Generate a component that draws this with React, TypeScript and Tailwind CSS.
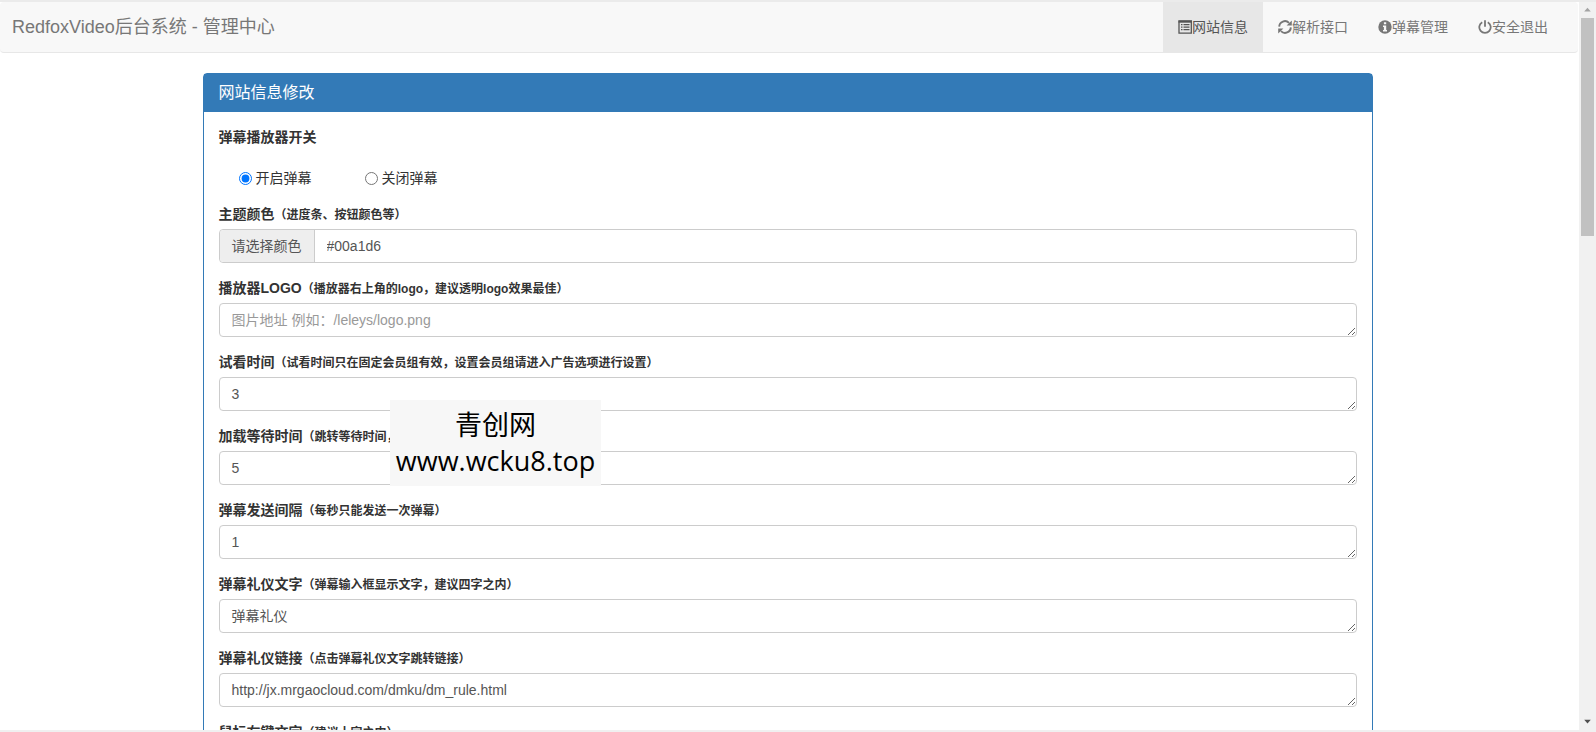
import { useState } from "react"

interface Field {
  id: string
  label: string
  hint: string
  value: string
  placeholder?: string
}

const navItems = [
  { label: '网站信息', icon: ListIcon, active: true },
  { label: '解析接口', icon: RefreshIcon, active: false },
  { label: '弹幕管理', icon: InfoIcon, active: false },
  { label: '安全退出', icon: PowerIcon, active: false },
]

const fields: Field[] = [
  { id: 'logo', label: '播放器LOGO', hint: '（播放器右上角的logo，建议透明logo效果最佳）', value: '', placeholder: '图片地址 例如：/leleys/logo.png' },
  { id: 'trytime', label: '试看时间', hint: '（试看时间只在固定会员组有效，设置会员组请进入广告选项进行设置）', value: '3' },
  { id: 'waittime', label: '加载等待时间', hint: '（跳转等待时间，', value: '5' },
  { id: 'sendtime', label: '弹幕发送间隔', hint: '（每秒只能发送一次弹幕）', value: '1' },
  { id: 'dmrule', label: '弹幕礼仪文字', hint: '（弹幕输入框显示文字，建议四字之内）', value: '弹幕礼仪' },
  { id: 'dmlink', label: '弹幕礼仪链接', hint: '（点击弹幕礼仪文字跳转链接）', value: 'http://jx.mrgaocloud.com/dmku/dm_rule.html' },
  { id: 'rightmenu', label: '鼠标右键文字', hint: '（建议十字之内）', value: '' },
]

function ListIcon() {
  return (
    <svg viewBox="0 0 14 14" className="h-3.5 w-3.5" fill="none" stroke="currentColor" aria-hidden="true">
      <path d="M1 1h12.3v12.2H1z" strokeWidth="1.3" />
      <path d="M.5 1.7h13.3" strokeWidth="2" />
      <path d="M3 4.7h1.5M3 7.2h1.5M3 9.7h1.5M5.5 4.7h6M5.5 7.2h6M5.5 9.7h6" strokeWidth="1.3" />
    </svg>
  )
}

function RefreshIcon() {
  return (
    <svg viewBox="0 0 14 14" className="h-3.5 w-3.5" fill="none" stroke="currentColor" aria-hidden="true">
      <path d="M1.2 6.6A5.7 5.7 0 0 1 11 2.9M12.8 7.4A5.7 5.7 0 0 1 3 11.1" strokeWidth="1.9" />
      <path d="M13.8.4v5.2H8.6zM.2 13.6V8.4h5.2z" fill="currentColor" stroke="none" />
    </svg>
  )
}

function InfoIcon() {
  return (
    <svg viewBox="0 0 14 14" className="h-3.5 w-3.5" aria-hidden="true">
      <circle cx="7" cy="7" r="6.7" fill="currentColor" />
      <path d="M5.9 2.2h2.3v2H5.9zM5 5.4h3.2v4.5H9v1.5H5V9.9h.9V6.9H5z" fill="#f8f8f8" />
    </svg>
  )
}

function PowerIcon() {
  return (
    <svg viewBox="0 0 14 14" className="h-3.5 w-3.5" fill="none" stroke="currentColor" strokeWidth="1.8" aria-hidden="true">
      <path d="M4.2 2.2a5.7 5.7 0 1 0 5.6 0M7 .2v6.6" />
    </svg>
  )
}

function Navbar() {
  return (
    <nav className="mr-px flex h-[51px] justify-between rounded border-b border-[#e7e7e7] bg-[#f8f8f8] pr-[15px]">
      <a href="#" className="px-3 py-[15px] text-lg leading-5 text-[#777]">
        RedfoxVideo后台系统 - 管理中心
      </a>
      <div className="flex">
        {navItems.map(({ label, icon: Icon, active }) => (
          <a
            key={label}
            href="#"
            className={`flex items-center px-[15px] text-sm leading-5 ${active ? 'bg-[#e7e7e7] text-[#555]' : 'text-[#777]'}`}
          >
            <Icon />
            {label}
          </a>
        ))}
      </div>
    </nav>
  )
}

function FieldLabel({ htmlFor, label, hint }: { htmlFor: string; label: string; hint: string }) {
  return (
    <label htmlFor={htmlFor} className="mb-[5px] block h-5 text-sm leading-5 font-bold">
      {label}
      <span className="text-xs">{hint}</span>
    </label>
  )
}

function Scrollbar() {
  return (
    <div className="flex w-[17px] shrink-0 flex-col items-center bg-[#f1f1f1]" aria-hidden="true">
      <svg viewBox="0 0 17 17" className="h-4 w-[17px] shrink-0 fill-[#a3a3a3]">
        <path d="M5 10l3.5-4 3.5 4z" />
      </svg>
      <div className="h-[30%] w-[13px] bg-[#c1c1c1]" />
      <svg viewBox="0 0 17 17" className="mt-auto h-4 w-[17px] shrink-0 fill-[#505050]">
        <path d="M5 6l3.5 4L12 6z" />
      </svg>
    </div>
  )
}

export default function App() {
  const [danmaku, setDanmaku] = useState('on')

  return (
    <div className="relative flex h-screen flex-col overflow-hidden border-t-2 border-b-2 border-t-[#ebebeb] border-b-[#f0f0f0] bg-white font-['Liberation_Sans','Noto_Sans_CJK_SC',sans-serif] text-[#333]">
      <div className="flex min-h-0 flex-1">
        <div className="min-w-0 flex-1 overflow-hidden">
          <Navbar />

          <div className="pt-5 pr-1">
            <main className="mx-auto max-w-[1170px] rounded border border-[#337ab7]">
              <h3 className="bg-[#337ab7] px-[15px] py-2.5 text-base leading-[18px] text-white">网站信息修改</h3>

              <form className="p-[15px]">
                {/* Danmaku switch */}
                <fieldset className="mb-[15px]">
                  <legend className="text-sm leading-5 font-bold">弹幕播放器开关</legend>
                  <div className="mt-5 flex h-[22px] gap-[53px] pl-5 text-sm leading-5">
                    <label className="flex items-center gap-1">
                      <input type="radio" name="danmaku" className="h-[13px] w-[13px]" checked={danmaku === 'on'} onChange={() => setDanmaku('on')} />
                      开启弹幕
                    </label>
                    <label className="flex items-center gap-1">
                      <input type="radio" name="danmaku" className="h-[13px] w-[13px]" checked={danmaku === 'off'} onChange={() => setDanmaku('off')} />
                      关闭弹幕
                    </label>
                  </div>
                </fieldset>

                {/* Theme colour */}
                <div className="mb-[15px]">
                  <FieldLabel htmlFor="color" label="主题颜色" hint="（进度条、按钮颜色等）" />
                  <div className="flex h-[34px] rounded border border-[#ccc] text-sm text-[#555]">
                    <span className="flex items-center rounded-l border-r border-[#ccc] bg-[#eee] px-3">请选择颜色</span>
                    <input id="color" type="text" defaultValue="#00a1d6" className="min-w-0 flex-1 rounded-r px-3 outline-none" />
                  </div>
                </div>

                {fields.map((field) => (
                  <div key={field.id} className="mb-[15px]">
                    <FieldLabel htmlFor={field.id} label={field.label} hint={field.hint} />
                    <textarea
                      id={field.id}
                      rows={1}
                      defaultValue={field.value}
                      placeholder={field.placeholder}
                      className="block h-[34px] w-full resize-y overflow-hidden rounded border border-[#ccc] px-3 py-1.5 text-sm leading-5 text-[#555] outline-none placeholder:text-[#999]"
                    />
                  </div>
                ))}
              </form>
            </main>
          </div>
        </div>
        <Scrollbar />
      </div>

      {/* Site stamp floating over the form */}
      <div className="absolute top-[398px] left-[390px] flex h-[86px] w-[211px] flex-col items-center justify-center bg-[#f7f7f7] font-['Open_Sans','Noto_Sans_CJK_SC',sans-serif] text-[27px] leading-9 text-black">
        <span>青创网</span>
        <span>www.wcku8.top</span>
      </div>
    </div>
  )
}
